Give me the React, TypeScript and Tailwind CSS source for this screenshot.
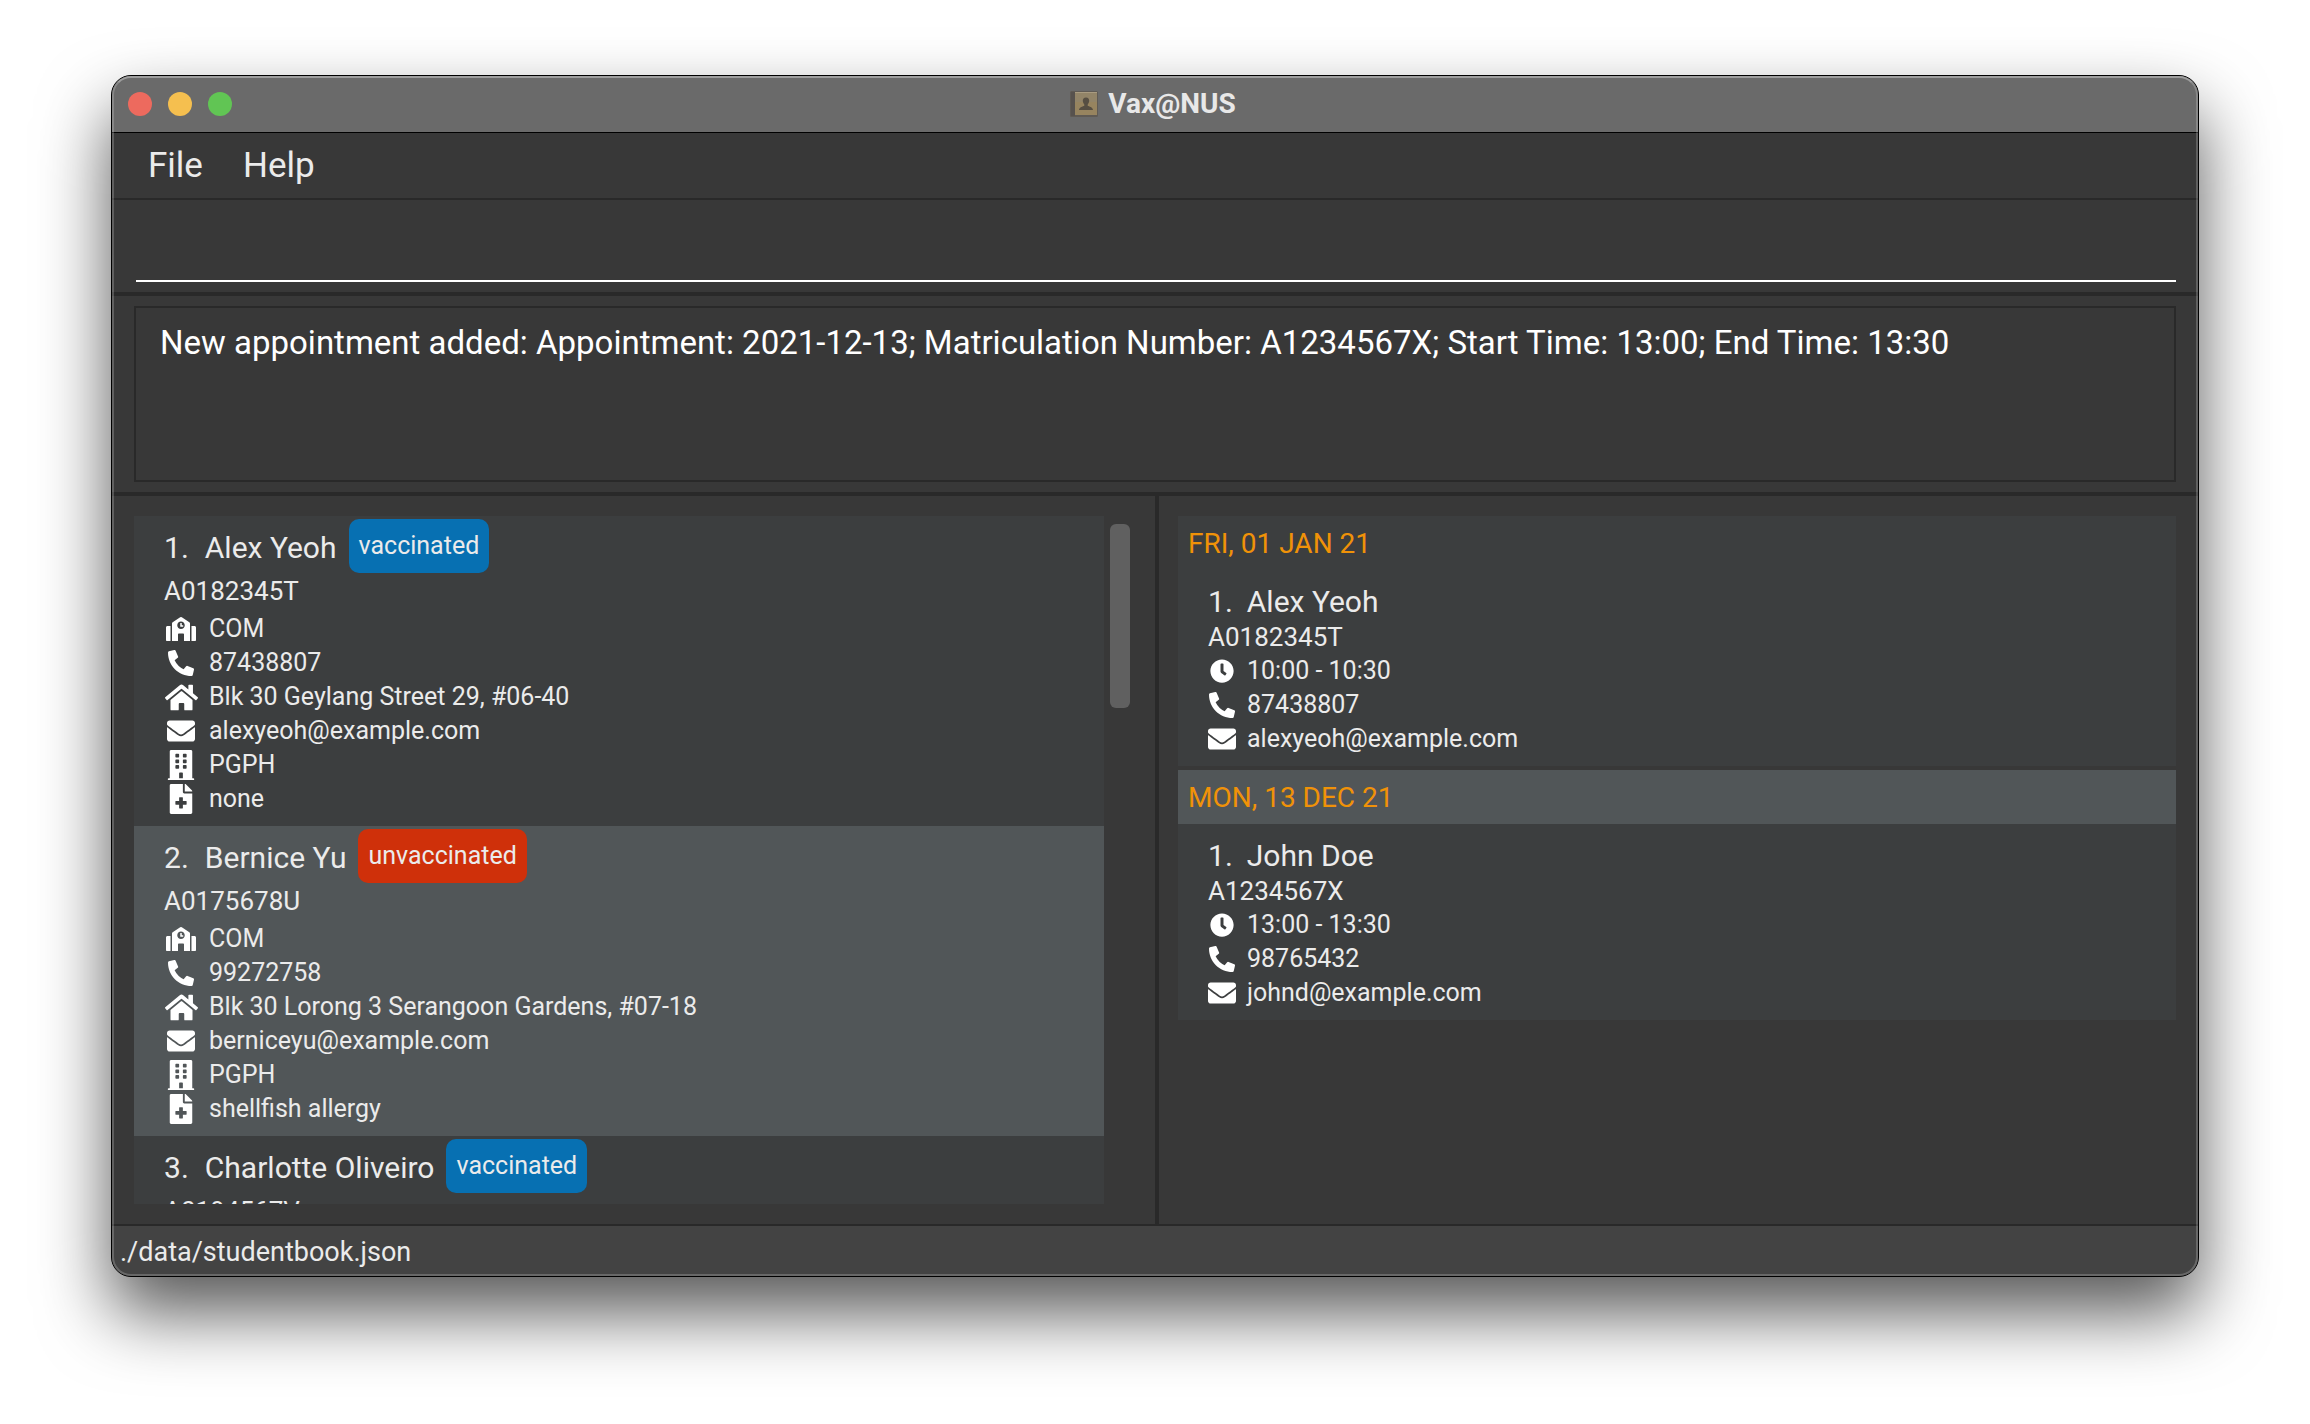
import type { IconType } from "react-icons";
import {
  FaBuilding,
  FaClock,
  FaEnvelope,
  FaFileMedical,
  FaHome,
  FaPhoneAlt,
  FaSchool,
} from "react-icons/fa";

type Detail = { icon: IconType; size: number; text: string };

type Student = {
  index: number;
  name: string;
  vaccinated: boolean;
  id: string;
  details: Detail[];
};

type Appointment = {
  date: string;
  index: number;
  name: string;
  id: string;
  details: Detail[];
};

const studentDetails = (
  faculty: string,
  phone: string,
  address: string,
  email: string,
  residence: string,
  medical: string,
): Detail[] => [
  { icon: FaSchool, size: 30, text: faculty },
  { icon: FaPhoneAlt, size: 26, text: phone },
  { icon: FaHome, size: 33, text: address },
  { icon: FaEnvelope, size: 28, text: email },
  { icon: FaBuilding, size: 30, text: residence },
  { icon: FaFileMedical, size: 30, text: medical },
];

const appointmentDetails = (time: string, phone: string, email: string): Detail[] => [
  { icon: FaClock, size: 24, text: time },
  { icon: FaPhoneAlt, size: 26, text: phone },
  { icon: FaEnvelope, size: 28, text: email },
];

const students: Student[] = [
  {
    index: 1,
    name: "Alex Yeoh",
    vaccinated: true,
    id: "A0182345T",
    details: studentDetails(
      "COM",
      "87438807",
      "Blk 30 Geylang Street 29, #06-40",
      "alexyeoh@example.com",
      "PGPH",
      "none",
    ),
  },
  {
    index: 2,
    name: "Bernice Yu",
    vaccinated: false,
    id: "A0175678U",
    details: studentDetails(
      "COM",
      "99272758",
      "Blk 30 Lorong 3 Serangoon Gardens, #07-18",
      "berniceyu@example.com",
      "PGPH",
      "shellfish allergy",
    ),
  },
  { index: 3, name: "Charlotte Oliveiro", vaccinated: true, id: "A0194567V", details: [] },
];

const appointments: Appointment[] = [
  {
    date: "FRI, 01 JAN 21",
    index: 1,
    name: "Alex Yeoh",
    id: "A0182345T",
    details: appointmentDetails("10:00 - 10:30", "87438807", "alexyeoh@example.com"),
  },
  {
    date: "MON, 13 DEC 21",
    index: 1,
    name: "John Doe",
    id: "A1234567X",
    details: appointmentDetails("13:00 - 13:30", "98765432", "johnd@example.com"),
  },
];

function BookIcon() {
  return (
    <svg width="28" height="26" viewBox="0 0 28 26" aria-hidden="true">
      <rect x="0" y="0" width="28" height="26" rx="1.5" fill="#5f5a54" />
      <rect x="1" y="1" width="4" height="24" fill="#57524e" />
      <rect x="5" y="1" width="22" height="23" fill="#97845f" />
      <rect x="5" y="1" width="22" height="10" fill="#928468" />
      <rect x="5" y="1" width="22" height="1" fill="#a99b80" />
      <path
        d="M16 6.500c2.200 0 3.400 1.500 3.200 3.600-.1 1.500-.9 2.500-1.500 3.300v1.300c1.400.8 5 1.300 5.300 4.300H9c.3-3 3.900-3.500 5.300-4.300v-1.300c-.6-.8-1.400-1.800-1.500-3.300-.2-2.100 1-3.600 3.200-3.600z"
        fill="#564e42"
      />
    </svg>
  );
}

function TitleBar() {
  return (
    <header className="grid h-[57px] shrink-0 grid-cols-[1fr_auto_1fr] items-center border-b border-black bg-[#6a6a6a] pr-5 pl-4">
      <div className="flex gap-4">
        <button aria-label="Close" className="size-6 rounded-full bg-[#ed6a5e]" />
        <button aria-label="Minimize" className="size-6 rounded-full bg-[#f5bf4f]" />
        <button aria-label="Zoom" className="size-6 rounded-full bg-[#61c554]" />
      </div>
      <div className="flex items-center gap-2.5 text-[#e8e8e8]">
        <BookIcon />
        <h1 className="text-[28px] leading-8 font-bold">Vax@NUS</h1>
      </div>
    </header>
  );
}

function DetailRow({ detail, wide }: { detail: Detail; wide: boolean }) {
  const Icon = detail.icon;
  return (
    <li className="flex h-[34px] items-center gap-[11px]">
      <span className={wide ? "flex w-[34px] justify-center" : "flex w-7 justify-center"}>
        <Icon size={detail.size} className="shrink-0 text-white" />
      </span>
      <span className="text-[25px] leading-[34px]">{detail.text}</span>
    </li>
  );
}

function StudentCard({ student }: { student: Student }) {
  return (
    <li className="bg-[#3c3e3f] pt-[3px] pb-2.5 pl-[30px] even:bg-[#515658]">
      <div className="flex h-[55px] items-start gap-3">
        <h2 className="flex gap-4 pt-2.5 text-[30px] leading-[38px]">
          <span>{student.index}.</span>
          <span>{student.name}</span>
        </h2>
        <span
          className={
            student.vaccinated
              ? "rounded-[10px] bg-[#0770b2] px-2.5 text-[25px] leading-[54px]"
              : "rounded-[10px] bg-[#cf300a] px-2.5 text-[25px] leading-[54px]"
          }
        >
          {student.vaccinated ? "vaccinated" : "unvaccinated"}
        </span>
      </div>
      <p className="mb-1 text-[26px] leading-[34px]">{student.id}</p>
      <ul>
        {student.details.map((detail) => (
          <DetailRow key={detail.text} detail={detail} wide />
        ))}
      </ul>
    </li>
  );
}

function AppointmentCard({ appointment }: { appointment: Appointment }) {
  return (
    <li className="group">
      <h2 className="bg-[#3c3e3f] px-2.5 pt-0.5 text-[28px] leading-[52px] text-[#f09208] group-even:bg-[#515658]">
        {appointment.date}
      </h2>
      <div className="bg-[#3c3e3f] pt-3.5 pb-2.5 pl-[30px]">
        <h3 className="flex gap-3.5 text-[30px] leading-9">
          <span>{appointment.index}.</span>
          <span>{appointment.name}</span>
        </h3>
        <p className="text-[26px] leading-[34px]">{appointment.id}</p>
        <ul>
          {appointment.details.map((detail) => (
            <DetailRow key={detail.text} detail={detail} wide={false} />
          ))}
        </ul>
      </div>
    </li>
  );
}

export default function App() {
  return (
    <div className="flex h-screen flex-col overflow-hidden bg-white px-[111px] pt-[75px] pb-[147px] font-[Roboto,'Liberation_Sans',sans-serif] text-[#ebebeb]">
      <div className="relative flex min-h-0 flex-1 flex-col rounded-[20px] border border-black bg-[#383838] shadow-[0_36px_70px_rgba(0,0,0,0.66)]">
        <div className="flex min-h-0 flex-1 flex-col overflow-hidden rounded-[19px]">
          <TitleBar />

          <nav className="flex h-[67px] shrink-0 items-center border-b-2 border-[#292929] px-4">
            <button className="px-5 text-[35px] leading-10">File</button>
            <button className="px-5 text-[35px] leading-10">Help</button>
          </nav>

          <div className="flex shrink-0 border-b-4 border-[#292929] pr-[22px] pb-2.5 pl-6">
            <input
              aria-label="Command"
              className="h-[82px] w-full border-b-2 border-white bg-transparent pt-5 text-[33px] text-white outline-none"
            />
          </div>

          <div className="flex shrink-0 border-b-4 border-[#292929] px-[22px] py-2.5">
            <textarea
              aria-label="Result"
              readOnly
              className="h-44 w-full resize-none border-2 border-[#292929] bg-transparent px-6 pt-[15px] text-[33px] leading-10 text-white outline-none"
              defaultValue="New appointment added: Appointment: 2021-12-13; Matriculation Number: A1234567X; Start Time: 13:00; End Time: 13:30"
            />
          </div>

          <main className="grid min-h-0 flex-1 grid-cols-2 grid-rows-1">
            <section aria-label="Students" className="flex min-h-0 gap-1.5 py-5 pr-[25px] pl-[22px]">
              <ul className="min-h-0 flex-1 overflow-hidden bg-[#3c3e3f]">
                {students.map((student) => (
                  <StudentCard key={student.id} student={student} />
                ))}
              </ul>
              <div className="w-5 py-2">
                <div className="h-[184px] rounded-md bg-[#606060]" />
              </div>
            </section>
            <section
              aria-label="Appointments"
              className="min-h-0 border-l-4 border-[#292929] py-5 pr-[22px] pl-[19px]"
            >
              <ul className="flex flex-col gap-1">
                {appointments.map((appointment) => (
                  <AppointmentCard key={appointment.date} appointment={appointment} />
                ))}
              </ul>
            </section>
          </main>

          <footer className="h-[52px] shrink-0 border-t-2 border-[#292929] bg-[#434343] px-2 pt-0.5 text-[27px] leading-[48px]">
            ./data/studentbook.json
          </footer>
        </div>
        <div className="pointer-events-none absolute inset-0 rounded-[19px] border-2 border-white/20 border-t-white/35" />
      </div>
    </div>
  );
}
